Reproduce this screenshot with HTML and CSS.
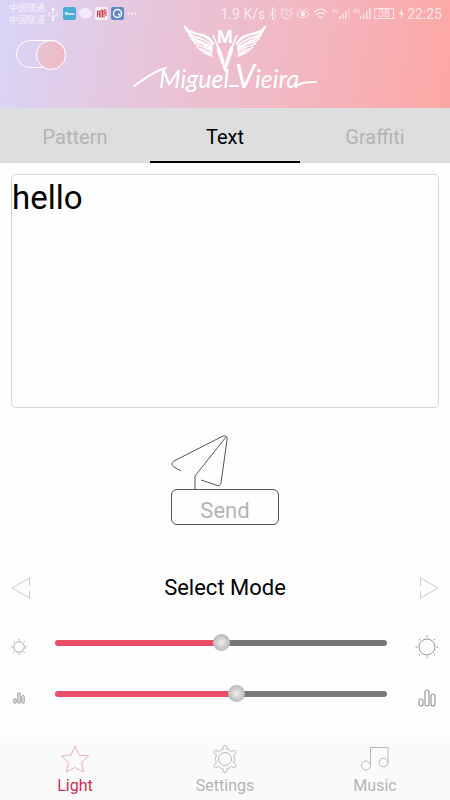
FILE: index.html
```html
<!DOCTYPE html>
<html lang="en">
<head>
  <meta charset="UTF-8">
  <meta name="viewport" content="width=device-width, initial-scale=1.0">
  <title>Miguel Vieira</title>
  <link rel="stylesheet" href="styles.css">
</head>
<body>
  <div class="app">
    <header class="header">
      <div class="status-bar">
        <div class="carriers" lang="zh-CN">
          <span>中国联通</span>
          <span>中国联通</span>
        </div>
        <svg class="status-usb" width="10" height="14" viewBox="0 0 10 14" fill="none" stroke="currentColor">
          <path d="M5 13V2M1 5v3l4 2 4-2V5"/>
          <path d="M3.500 3L5 .5 6.500 3z" fill="currentColor"/>
          <circle cx="5" cy="12.500" r="1" fill="currentColor"/>
        </svg>
        <div class="notifications">
          <span class="app-icon app-icon-bcon">Bcon</span>
          <svg width="13" height="12" viewBox="0 0 13 12" fill="#f3ebfa">
            <path d="M6.500 0C10 0 13 2 13 5s-2 5-5.500 5H6L4 12l-.5-2.500C1.500 9 0 7.300 0 5c0-3 3-5 6.500-5z"/>
          </svg>
          <svg width="13" height="13" viewBox="0 0 13 13">
            <rect width="13" height="13" rx="2" fill="#f6edf2"/>
            <path d="M2.500 10V4h2v6M4.500 7h-2M6 11V3h1.500v7M9 11V3h2v6M9 6h2" fill="none" stroke="#d13a52"/>
          </svg>
          <svg width="13" height="13" viewBox="0 0 13 13">
            <rect width="13" height="13" rx="2" fill="#5f86c6"/>
            <circle cx="6.500" cy="6.500" r="4" fill="none" stroke="#fff" stroke-width="1.500"/>
            <path d="M7 7h1.500v1.500z" fill="#fff" stroke="#fff"/>
          </svg>
          <svg width="10" height="3" viewBox="0 0 10 3" fill="currentColor">
            <circle cx="1.500" cy="1.500" r="1"/><circle cx="5" cy="1.500" r="1"/><circle cx="8.500" cy="1.500" r="1"/>
          </svg>
        </div>
        <div class="status-right">
          <span>1.9 K/s</span>
          <svg width="9" height="13" viewBox="0 0 9 13" fill="none" stroke="currentColor">
            <path d="M1 3.500l7 6-3.500 3V.5L8 3.500l-7 6"/>
          </svg>
          <svg width="13" height="13" viewBox="0 0 13 13" fill="none" stroke="currentColor">
            <circle cx="6.500" cy="7" r="4.800"/><path d="M6.500 4v3l2 1.500M.5 3L3 .8M12.500 3L10 .8"/>
          </svg>
          <svg width="14" height="13" viewBox="0 0 14 13" fill="none" stroke="currentColor">
            <path d="M1 7c3-4.500 9-4.500 12 0-3 5-9 5-12 0zM2 4L.8 2.500M4.500 2.500L4 1M9.500 2.500L10 1M12 4l1.200-1.500"/>
            <circle cx="7" cy="7" r="1.800" fill="currentColor"/>
          </svg>
          <svg width="15" height="12" viewBox="0 0 15 12" fill="none" stroke="currentColor" stroke-width="1.300">
            <path d="M1 4.500c4-4.500 9-4.500 13 0M3.200 7c3-3 5.600-3 8.600 0M5.500 9.300c1.500-1.300 2.500-1.300 4 0"/>
            <circle cx="7.500" cy="11" r=".7" fill="currentColor" stroke="none"/>
          </svg>
          <span class="signal">
            <small>3G</small>
            <svg width="11" height="11" viewBox="0 0 11 11" fill="currentColor">
              <path d="M0 8h1.500v3H0zM3 6h1.500v5H3zM6 3h1.500v8H6z"/><path d="M9 0h1.500v11H9z" opacity=".4"/>
            </svg>
          </span>
          <span class="signal">
            <small>4G</small>
            <svg width="11" height="11" viewBox="0 0 11 11" fill="currentColor">
              <path d="M0 8h1.500v3H0zM3 6h1.500v5H3zM6 3h1.500v8H6zM9 0h1.500v11H9z"/>
            </svg>
          </span>
          <span class="battery">38</span>
          <svg width="7" height="9" viewBox="0 0 7 9" fill="currentColor"><path d="M5 0L2 5h2l-.5 4L7 4H5z"/></svg>
          <span>22:25</span>
        </div>
      </div>
      <div class="brand">
        <input class="power-toggle" type="checkbox" aria-label="Power" checked>
        <svg class="logo" width="184" height="74" viewBox="0 0 184 74" role="img" aria-label="Miguel Vieira">
          <!-- wings -->
          <g id="wing" fill="none" stroke="#fff" stroke-linecap="round">
            <path d="M52 2c3 6 10 6 17 8 6 2 9 4 11 9" stroke-width="2.500"/>
            <path d="M54 6c4 6 10 6 15 8 5 2 8 4 10 8" stroke-width="1.800"/>
            <path d="M56 10c4 5 9 5 13 7 4 2 8 4 10 7" stroke-width="1.800"/>
            <path d="M58 14c4 4 8 3 12 5 4 2 6 3 9 6" stroke-width="1.600"/>
            <path d="M61 18c4 3 7 3 10 4 3 1 6 3 8 5" stroke-width="1.400"/>
            <path d="M64 22c3 3 6 2 8 3l7 4M67 25c3 2 6 1 12 6M71 28c2 1 5 1 7 3" stroke-width="1.200"/>
          </g>
          <use href="#wing" transform="translate(184 0) scale(-1 1)"/>
          <!-- crest -->
          <path d="M84 18l8 14 8-14v8l-8 22-8-22z" fill="#fff"/>
          <path d="M87 21l5 11 5-11-5 19z" fill="#eebfcd"/>
          <path d="M80 10l11 27M104 10L93 37" fill="none" stroke="#fff" stroke-width="1.500"/>
          <text class="crest-letter" x="92" y="18" text-anchor="middle">M</text>
          <!-- signature -->
          <path d="M1 61C10 55 22 45 33 43M97 61h8M163 61c6-4 12-4 20-4" fill="none" stroke="#fff" stroke-width="2" stroke-linecap="round"/>
          <text class="signature" x="26" y="63">Miguel <tspan class="signature-initial">V</tspan>ieira</text>
        </svg>
      </div>
    </header>

    <div class="tabs" role="tablist">
      <button class="tab" role="tab" aria-selected="false">Pattern</button>
      <button class="tab active" role="tab" aria-selected="true">Text</button>
      <button class="tab" role="tab" aria-selected="false">Graffiti</button>
    </div>

    <main class="content">
      <textarea class="message" aria-label="Message" spellcheck="false">hello</textarea>

      <div class="send">
        <svg width="60" height="54" viewBox="0 0 60 54" fill="none" stroke="#555">
          <path d="M10 36l-7-4q-4-3 0-6L52 1q5-1 4 4l-6 43q-1 4-5 2l-15-5"/>
          <path d="M55 2L24 41v13"/>
        </svg>
        <button class="send-button">Send</button>
      </div>

      <div class="mode">
        <button class="mode-arrow" aria-label="Previous mode">
          <svg width="20" height="22" viewBox="0 0 20 22" fill="none" stroke="#ccc"><path d="M18.500 9V1L1 11l17.500 10v-7"/></svg>
        </button>
        <h2 class="mode-title">Select Mode</h2>
        <button class="mode-arrow" aria-label="Next mode">
          <svg width="20" height="22" viewBox="0 0 20 22" fill="none" stroke="#ccc"><path d="M1.500 9V1L19 11 1.500 21v-7"/></svg>
        </button>
      </div>

      <div class="sliders">
        <div class="slider-row">
          <svg width="16" height="16" viewBox="0 0 24 24" fill="none" stroke="#aaa" stroke-width="1.500">
            <circle cx="12" cy="12" r="8"/>
            <path d="M12 0v2M12 22v2M0 12h2M22 12h2M3.500 3.500L5 5M19 19l1.500 1.500M3.500 20.500L5 19M19 5l1.500-1.500"/>
          </svg>
          <input class="slider" type="range" min="0" max="100" value="50" aria-label="Brightness" style="--value: 50%">
          <svg width="24" height="24" viewBox="0 0 24 24" fill="none" stroke="#999">
            <circle cx="12" cy="12" r="8"/>
            <path d="M12 .5v2M12 21.500v2M.5 12h2M21.500 12h2M4 4l1 1M19 19l1 1M4 20l1-1M19 5l1-1"/>
          </svg>
        </div>
        <div class="slider-row">
          <svg width="12" height="12" viewBox="0 0 18 18" fill="#ddd" stroke="#aaa" stroke-width="1.500">
            <rect x="1" y="10" width="4" height="7" rx="2"/><rect x="7" y="1" width="4" height="16" rx="2"/><rect x="13" y="5" width="4" height="12" rx="2"/>
          </svg>
          <input class="slider" type="range" min="0" max="100" value="55" aria-label="Speed" style="--value: 55%">
          <svg width="18" height="18" viewBox="0 0 18 18" fill="none" stroke="#999" stroke-width="1.200">
            <rect x="1" y="10" width="4" height="7" rx="2"/><rect x="7" y="1" width="4" height="16" rx="2"/><rect x="13" y="5" width="4" height="12" rx="2"/>
          </svg>
        </div>
      </div>
    </main>

    <nav class="bottom-nav">
      <a class="nav-item active" href="#light">
        <svg width="28" height="28" viewBox="0 0 28 28" fill="none" stroke="#e79aac" stroke-width=".8">
          <path d="M14 1l4 9 9.500 1-7 6.500L22.500 27 14 22.500 5.500 27l2-9.500L.5 11l9.500-1z"/>
        </svg>
        <span>Light</span>
      </a>
      <a class="nav-item" href="#settings">
        <svg width="28" height="28" viewBox="0 0 28 28" fill="none" stroke="#aaa" stroke-width=".8">
          <circle cx="14" cy="14" r="6.500"/>
          <path d="M12 4.200V2.500q0-2 2-2t2 2v1.700q2.500.6 4.500 2.400l1.500-.9q1.800-1 2.800.7t-.7 2.700l-1.500.9q.8 2 .8 4t-.8 4l1.500.9q1.700 1 .7 2.700t-2.800.7l-1.500-.9q-2 1.800-4.500 2.400v1.700q0 2-2 2t-2-2v-1.700q-2.500-.6-4.500-2.400l-1.500.9q-1.800 1-2.800-.7t.7-2.700l1.500-.9q-.8-2-.8-4t.8-4l-1.500-.9q-1.700-1-.7-2.700t2.800-.7l1.500.9q2-1.800 4.500-2.400z"/>
        </svg>
        <span>Settings</span>
      </a>
      <a class="nav-item" href="#music">
        <svg width="28" height="28" viewBox="0 0 28 28" fill="none" stroke="#aaa" stroke-width=".8">
          <circle cx="5" cy="20.500" r="4.500"/><circle cx="22.500" cy="17.500" r="4.300"/>
          <path d="M9.500 20.500V2.500H27v15"/>
        </svg>
        <span>Music</span>
      </a>
    </nav>
  </div>
</body>
</html>
```
FILE: styles.css
```css
:root {
  --accent-color: #cb2f58;
  --slider-color: #ea4e69;
  --track-color: #777777;
  --muted-color: #b4b4b4;
  --tab-background: #dddee0;
}

* {
  box-sizing: border-box;
}

body {
  font-family: Roboto, "Noto Sans CJK SC", sans-serif;
  margin: 0;
  background-color: #fefefe;
  color: #000;
}

button {
  font-family: inherit;
  background: none;
  border: none;
  padding: 0;
  cursor: pointer;
}

svg {
  display: block;
  flex: none;
}

.app {
  display: flex;
  flex-direction: column;
  min-height: 100vh;
}

/* Header */
.header {
  background: linear-gradient(100deg, #d9d5f7 0%, #e6c6dc 32%, #f1b9c5 62%, #fda7a4 100%);
  padding-bottom: 9px;
}

.status-bar {
  display: flex;
  align-items: center;
  height: 25px;
  padding: 2px 8px 0 9px;
  color: rgba(255, 255, 255, 0.7);
}

.carriers {
  display: flex;
  flex-direction: column;
  font-size: 9px;
  line-height: 12px;
}

.status-usb {
  margin-left: 3px;
}

.notifications {
  display: flex;
  align-items: center;
  gap: 3px;
  margin-left: 5px;
}

.app-icon {
  width: 13px;
  height: 13px;
  border-radius: 2px;
  font-size: 4px;
  font-weight: bold;
  line-height: 13px;
  text-align: center;
  color: #fff;
}

.app-icon-bcon {
  background-color: #4badd6;
}

.status-right {
  display: flex;
  align-items: center;
  gap: 3px;
  margin-left: auto;
  font-size: 14px;
}

.signal {
  display: flex;
  align-items: flex-end;
}

.signal small {
  align-self: flex-start;
  font-size: 6px;
  line-height: 6px;
}

.battery {
  border: 1px solid currentColor;
  width: 20px;
  font-size: 10px;
  line-height: 9px;
  text-align: center;
}

.brand {
  display: grid;
  grid-template-columns: 1fr auto 1fr;
  align-items: start;
  padding-left: 16px;
  padding-right: 16px;
}

.power-toggle {
  appearance: none;
  width: 50px;
  height: 28px;
  margin: 15px 0 0;
  border: 1px solid #fff;
  border-radius: 14px;
  display: flex;
  cursor: pointer;
}

.power-toggle::before {
  content: "";
  width: 28px;
  height: 28px;
  margin: -1px;
  border: 1px solid #fff;
  border-radius: 50%;
}

.power-toggle:checked::before {
  margin-left: auto;
  background: linear-gradient(90deg, #e6c3d5, #f0bac4);
}

.logo {
  overflow: visible;
}

.crest-letter {
  font-family: Roboto, sans-serif;
  font-size: 18px;
  font-weight: 700;
  fill: #fff;
}

.signature {
  font-family: "Brush Script MT", "Segoe Script", Lato, sans-serif;
  font-size: 25px;
  font-style: italic;
  fill: #fff;
}

.signature-initial {
  font-size: 32px;
}

/* Tabs */
.tabs {
  display: grid;
  grid-template-columns: repeat(3, 1fr);
  background-color: var(--tab-background);
}

.tab {
  height: 55px;
  padding-top: 4px;
  border-bottom: 2px solid transparent;
  font-size: 20px;
  color: var(--muted-color);
}

.tab.active {
  color: #000;
  border-bottom-color: #000;
}

/* Content */
.content {
  flex: 1;
  display: flex;
  flex-direction: column;
  padding: 11px;
}

.message {
  width: 100%;
  height: 234px;
  padding: 3px 0;
  border: 1px solid #d5d5d5;
  border-radius: 5px;
  background: none;
  font-family: inherit;
  font-size: 33px;
  line-height: 40px;
  color: #000;
  resize: none;
  outline: none;
}

.send {
  display: flex;
  flex-direction: column;
  align-self: center;
  margin-top: 27px;
}

.send-button {
  width: 108px;
  height: 36px;
  padding-top: 8px;
  border: 1px solid #555;
  border-radius: 6px;
  font-size: 22px;
  line-height: 26px;
  color: var(--muted-color);
}

.mode {
  display: flex;
  align-items: center;
  justify-content: space-between;
  margin-top: 48px;
}

.mode-title {
  margin: 0;
  font-size: 22px;
  font-weight: normal;
  line-height: 30px;
}

.sliders {
  display: grid;
  gap: 11px;
  margin-top: 24px;
}

.slider-row {
  display: grid;
  grid-template-columns: 16px 1fr 24px;
  align-items: center;
  justify-items: center;
  column-gap: 28px;
  height: 40px;
}

.slider {
  appearance: none;
  width: 100%;
  height: 18px;
  margin: 0 0 8px;
  background: none;
  cursor: pointer;
}

.slider::-webkit-slider-runnable-track {
  height: 6px;
  border-radius: 3px;
  background: linear-gradient(90deg, var(--slider-color) var(--value), var(--track-color) var(--value));
}

.slider::-webkit-slider-thumb {
  appearance: none;
  width: 17px;
  height: 17px;
  margin-top: -6px;
  border-radius: 50%;
  background: radial-gradient(circle, #f0f0f0 0%, #cccccc 45%, #a8a8a8 100%);
}

/* Bottom navigation */
.bottom-nav {
  display: grid;
  grid-template-columns: repeat(3, 1fr);
  height: 63px;
  padding-top: 8px;
  background-color: #fafafa;
}

.nav-item {
  display: flex;
  flex-direction: column;
  align-items: center;
  gap: 3px;
  font-size: 16px;
  line-height: 20px;
  text-decoration: none;
  color: var(--muted-color);
}

.nav-item.active {
  color: var(--accent-color);
}
```
